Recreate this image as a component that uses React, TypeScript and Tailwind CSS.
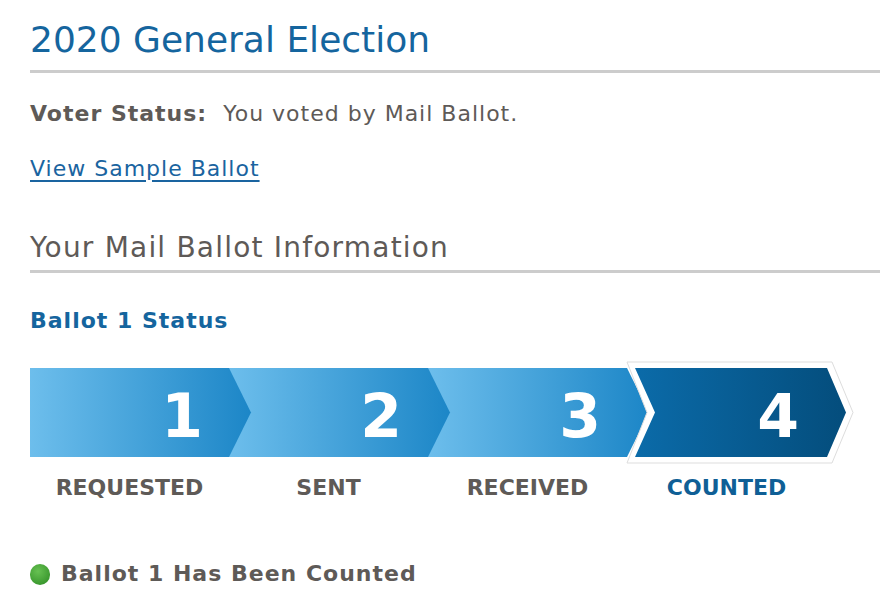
const font = { fontFamily: '"DejaVu Sans", Verdana, sans-serif' };

const steps = ["REQUESTED", "SENT", "RECEIVED", "COUNTED"];

function StatusChevrons() {
  // drawn back to front so each tip sits over the next step
  const light = [2, 1, 0].map((i) => {
    const x = 199 * i;
    return (
      <polygon
        key={i}
        points={`${x},8 ${x + 199},8 ${x + 221},52.5 ${x + 199},97 ${x},97`}
        fill="url(#lightStep)"
      />
    );
  });
  return (
    <svg width="830" height="106" viewBox="0 0 830 106" className="block">
      <defs>
        <linearGradient id="lightStep" x1="0" y1="0" x2="1" y2="0">
          <stop offset="0" stopColor="#6dbeec" />
          <stop offset="1" stopColor="#1c86c7" />
        </linearGradient>
        <linearGradient id="darkStep" x1="0" y1="0" x2="1" y2="0">
          <stop offset="0" stopColor="#0b6ba9" />
          <stop offset="1" stopColor="#044d7c" />
        </linearGradient>
      </defs>
      {light}
      <polygon
        points="597,2 802,2 823,52.5 802,103 597,103 617,52.5"
        fill="#ffffff"
        stroke="#dddddd"
        strokeWidth="1"
      />
      <polygon points="605,8 797,8 816,52.5 797,97 605,97 625,52.5" fill="url(#darkStep)" />
      {[152, 351, 550, 748].map((x, i) => (
        <text
          key={i}
          x={x}
          y="77"
          textAnchor="middle"
          fill="#ffffff"
          fontSize="60"
          fontWeight="bold"
          fontFamily='"DejaVu Sans", Verdana, sans-serif'
        >
          {i + 1}
        </text>
      ))}
    </svg>
  );
}

export default function App() {
  return (
    <div className="min-h-screen bg-white pl-[30px] pt-[18px] text-[#5e5a57]" style={font}>
      <h1 className="text-[36px] leading-[44px] text-[#15659e] pb-[8px] border-b-[3px] border-[#cccccc]">
        2020 General Election
      </h1>

      <p className="mt-[27px] text-[22px] leading-[28px] tracking-[1px]">
        <span className="font-bold">Voter Status:</span>&nbsp; You voted by Mail Ballot.
      </p>

      <p className="mt-[27px] text-[22px] leading-[28px] tracking-[1px]">
        <a href="#" className="text-[#1a64a0] underline underline-offset-[4px]">View Sample Ballot</a>
      </p>

      <h2 className="mt-[48px] text-[28px] leading-[34px] tracking-[1.2px] pb-[5px] border-b-[3px] border-[#cccccc]">
        Your Mail Ballot Information
      </h2>

      <h3 className="mt-[34px] text-[22px] leading-[28px] tracking-[1px] font-bold text-[#15659e]">
        Ballot 1 Status
      </h3>

      <div className="mt-[25px]">
        <StatusChevrons />
      </div>

      <div className="mt-[8px] flex">
        {steps.map((s, i) => (
          <div
            key={s}
            className={`w-[199px] text-center text-[22px] leading-[28px] font-bold ${
              i === 3 ? "text-[#0f5f96]" : "text-[#5e5a57]"
            }`}
          >
            {s}
          </div>
        ))}
      </div>

      <div className="mt-[58px] flex items-center gap-[11px]">
        <span className="w-[20px] h-[21px] rounded-full bg-[radial-gradient(circle_at_40%_35%,#67c152,#2b8a22)]" />
        <span className="text-[22px] leading-[28px] tracking-[1px] font-bold">Ballot 1 Has Been Counted</span>
      </div>
    </div>
  );
}
